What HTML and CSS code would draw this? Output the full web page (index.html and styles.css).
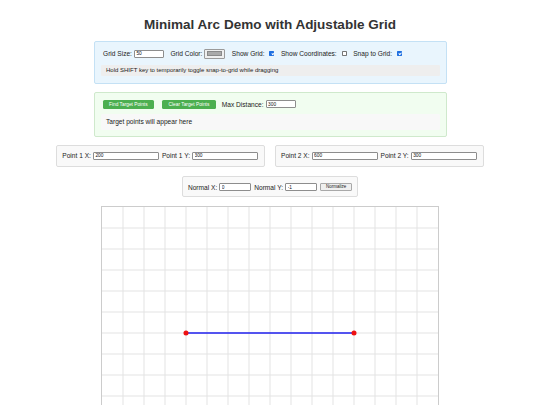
FILE: index.html
```html
<!DOCTYPE html>
<html lang="en">
<head>
<meta charset="utf-8">
<title>Minimal Arc Demo with Adjustable Grid</title>
<link rel="stylesheet" href="styles.css">
</head>
<body>
  <h1 class="title">Minimal Arc Demo with Adjustable Grid</h1>

  <section class="panel panel-grid">
    <div class="row">
      <label class="group">Grid Size: <input class="field field-sm" type="number" value="50"></label>
      <label class="group">Grid Color: <input class="swatch" type="color" value="#aaaaaa"></label>
      <label class="group">Show Grid: <input class="check" type="checkbox" checked></label>
      <label class="group">Show Coordinates: <input class="check" type="checkbox"></label>
      <label class="group">Snap to Grid: <input class="check" type="checkbox" checked></label>
    </div>
    <div class="hint">Hold SHIFT key to temporarily toggle snap-to-grid while dragging</div>
  </section>

  <section class="panel panel-target">
    <div class="row row-target">
      <button class="btn">Find Target Points</button>
      <button class="btn">Clear Target Points</button>
      <label class="group">Max Distance: <input class="field field-sm" type="number" value="300"></label>
    </div>
    <div class="result">Target points will appear here</div>
  </section>

  <div class="points">
    <div class="box">
      <label class="group">Point 1 X: <input class="field field-lg" type="number" value="200"></label>
      <label class="group">Point 1 Y: <input class="field field-lg" type="number" value="300"></label>
    </div>
    <div class="box">
      <label class="group">Point 2 X: <input class="field field-lg" type="number" value="600"></label>
      <label class="group">Point 2 Y: <input class="field field-lg" type="number" value="300"></label>
    </div>
  </div>

  <div class="normal-wrap">
    <div class="box box-normal">
      <label class="group">Normal X: <input class="field field-xs" type="number" value="0"></label>
      <label class="group">Normal Y: <input class="field field-xs" type="number" value="-1"></label>
      <button class="btn-plain">Normalize</button>
    </div>
  </div>

  <div class="canvas">
    <svg class="canvas-svg" viewBox="0 0 800 600" width="336" height="252" aria-label="Arc canvas">
      <path class="grid" d="M50 0V600M100 0V600M150 0V600M200 0V600M250 0V600M300 0V600M350 0V600M400 0V600M450 0V600M500 0V600M550 0V600M600 0V600M650 0V600M700 0V600M750 0V600M0 50H800M0 100H800M0 150H800M0 200H800M0 250H800M0 300H800M0 350H800M0 400H800M0 450H800M0 500H800M0 550H800"/>
      <line class="seg" x1="200" y1="300" x2="600" y2="300"/>
      <circle class="pt" cx="200" cy="300" r="6"/>
      <circle class="pt" cx="600" cy="300" r="6"/>
    </svg>
  </div>
</body>
</html>
```

FILE: styles.css
```css
* { box-sizing: border-box; }

html, body { background: #fff; }

body {
  margin: 0;
  padding: 8px 0 0;
  font-family: "Liberation Sans", Arial, sans-serif;
  font-size: 6.6px;
  color: #222;
}

.title {
  margin: 9px 0 8px;
  font-size: 13.5px;
  line-height: 16px;
  font-weight: bold;
  color: #333;
  text-align: center;
}

.panel {
  width: 353px;
  margin: 0 auto;
  padding: 6px;
  border-radius: 2px;
}

.panel-grid {
  background: #e9f5fd;
  border: 1px solid #c4e1f5;
}

.panel-target {
  margin-top: 8px;
  background: #f1fdf0;
  border: 1px solid #cfe9cc;
}

.row {
  display: flex;
  align-items: center;
  gap: 6.5px;
  height: 11px;
  padding-left: 2.5px;
}

.row-target {
  height: 10px;
  padding-left: 2px;
  gap: 6px;
}

.group {
  display: flex;
  align-items: center;
  gap: 2px;
  white-space: nowrap;
}

.field {
  height: 8px;
  padding: 0 1.5px;
  border: 1px solid #8d8d8d;
  border-radius: 1px;
  background: #fff;
  font-family: "Liberation Sans", Arial, sans-serif;
  font-size: 4.8px;
  color: #111;
  -moz-appearance: textfield;
}

.field::-webkit-inner-spin-button,
.field::-webkit-outer-spin-button {
  -webkit-appearance: none;
  margin: 0;
}

.field-sm { width: 30px; }
.field-lg { width: 66px; }
.field-xs { width: 32px; flex: none; }

.swatch {
  width: 21px;
  height: 10px;
  padding: 0;
  border: 1px solid #9a9a9a;
  border-radius: 1px;
  background: #efefef;
}

.swatch::-webkit-color-swatch-wrapper { padding: 1.5px 2px; }
.swatch::-webkit-color-swatch { border: 0.5px solid #8a8a8a; }

.check {
  -webkit-appearance: none;
  appearance: none;
  position: relative;
  flex: none;
  width: 5px;
  height: 5px;
  margin: 0 0 0 3px;
  border: 0.6px solid #767676;
  border-radius: 0.8px;
  background: #fff;
}

.check:checked {
  background: #1f6fe0;
  border-color: #1f6fe0;
}

.check:checked::after {
  content: "";
  position: absolute;
  left: 1.3px;
  top: 0.3px;
  width: 1.2px;
  height: 2.3px;
  border: solid #fff;
  border-width: 0 0.7px 0.7px 0;
  transform: rotate(45deg);
}

.hint {
  margin: 6px 0 1.5px;
  padding: 2px 5.5px;
  background: #eeeeee;
  border-radius: 1px;
  font-size: 6px;
  line-height: 6.5px;
  color: #222;
}

.btn {
  height: 9px;
  padding: 0 6.5px;
  border: none;
  border-radius: 1.5px;
  background: #4caf50;
  color: #fff;
  font-family: "Liberation Sans", Arial, sans-serif;
  font-size: 4.8px;
  line-height: 9px;
}

.row-target .btn + .btn { margin-left: 2px; }

.result {
  margin-top: 4.5px;
  padding: 4px 5.5px;
  background: #f8f8f8;
  border-radius: 1.5px;
  line-height: 8px;
}

.points {
  display: flex;
  justify-content: center;
  gap: 10px;
  margin-top: 8px;
}

.box {
  display: flex;
  align-items: center;
  gap: 3px;
  padding: 6px 6px 6px 5px;
  background: #f9f9f9;
  border: 1px solid #dddddd;
  border-radius: 2px;
}

.normal-wrap {
  display: flex;
  justify-content: center;
  margin-top: 9.5px;
}

.box-normal {
  padding: 6px 5px 5px;
}

.btn-plain {
  flex: none;
  width: 32px;
  height: 8px;
  padding: 0;
  border: 1px solid #a8a8a8;
  border-radius: 1px;
  background: #efefef;
  color: #222;
  font-family: "Liberation Sans", Arial, sans-serif;
  font-size: 4.5px;
  line-height: 6px;
}

.canvas {
  width: 338px;
  margin: 8.5px auto 0;
  border: 1px solid #cccccc;
  background: #fff;
}

.canvas-svg { display: block; }

.grid {
  fill: none;
  stroke: #e3e3e3;
  stroke-width: 1px;
  vector-effect: non-scaling-stroke;
}

.seg {
  stroke: #1f1fee;
  stroke-width: 3;
}

.pt { fill: #ee1111; }
```
